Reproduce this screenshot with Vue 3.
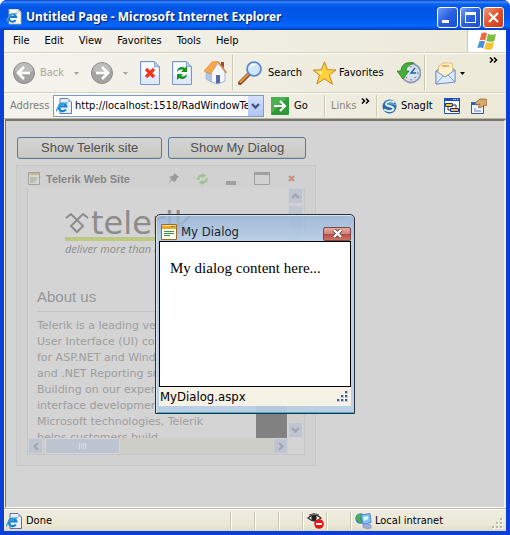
<script setup>
import { ref } from 'vue'

const menus = ['File', 'Edit', 'View', 'Favorites', 'Tools', 'Help']
const address = ref('http://localhost:1518/RadWindowTest/Default.aspx')
const gripDots = [[8, 0], [4, 4], [8, 4], [0, 8], [4, 8], [8, 8]]
</script>

<template>
  <div class="browser">
    <header class="titlebar">
      <svg class="ic16" viewBox="0 0 16 16">
        <path d="M3 0h9l3 3v12H3z" fill="#fbfaf0" stroke="#b9b49b" stroke-width=".8" />
        <path d="M12 0v3h3" fill="#d8d5c4" stroke="#b9b49b" stroke-width=".6" />
        <path d="M9.6 11.2A3.7 3.7 0 1 1 10.2 8H3.2" fill="none" stroke="#1c78c8" stroke-width="2" />
        <path d="M.8 12.5C.5 9 6 3.600 11.300 4.600" fill="none" stroke="#55a9dc" stroke-width="1.200" />
      </svg>
      <h1>Untitled Page - Microsoft Internet Explorer</h1>
      <div class="caption">
        <button aria-label="Minimize"><svg viewBox="0 0 19 19"><path d="M4 12h7v3H4z" fill="#fff" /></svg></button>
        <button aria-label="Maximize"><svg viewBox="0 0 19 19"><path d="M4 4h11v11H4zM5 7v7h9V7z" fill="#fff" fill-rule="evenodd" /></svg></button>
        <button class="close" aria-label="Close"><svg viewBox="0 0 19 19"><path d="M5 5l9 9M14 5l-9 9" stroke="#fff" stroke-width="2.200" /></svg></button>
      </div>
    </header>

    <div class="frame">
      <nav class="menubar">
        <button v-for="m in menus" :key="m">{{ m }}</button>
        <div class="throbber">
          <svg width="20" height="19" viewBox="0 0 20 19">
            <path d="M4.500 1.500C7-.2 8.500.4 10 1.300L8.300 8.500C6.500 7.400 5 7.400 2.600 8.500z" fill="#ee6a3a" />
            <path d="M11 1.800c2.500 1.300 5 1.200 8 .2l-1.700 7c-3 1.200-5.500 1-8 0z" fill="#7dbb42" />
            <path d="M2.300 9.500c2.300-1 3.900-1 5.700 0l-1.800 6.800c-1.900-1-3.700-1-5.900 0z" fill="#4b8fdc" />
            <path d="M9 10c2.500 1.200 5 1.200 8 0l-1.800 7c-3 1.200-5.500 1-8 0z" fill="#f6c433" />
          </svg>
        </div>
      </nav>

      <div class="toolbar">
        <button class="tb back" disabled>
          <svg width="22" height="22" viewBox="0 0 22 22">
            <circle cx="11" cy="11" r="10.500" fill="#a3a3a1" stroke="#8c8c8a" />
            <path d="M2 9a9 8 0 0 1 18 0c-5 3-13 3-18 0z" fill="#bcbcba" />
            <path d="M17 11H6M11 5l-6 6 6 6" fill="none" stroke="#fff" stroke-width="2.600" />
          </svg>
          <span>Back</span>
          <svg class="drop" width="5" height="3" viewBox="0 0 5 3"><path d="M0 0h5L2.500 3z" fill="#a5a395" /></svg>
        </button>
        <button class="tb fwd" disabled aria-label="Forward">
          <svg width="22" height="22" viewBox="0 0 22 22">
            <circle cx="11" cy="11" r="10.500" fill="#a3a3a1" stroke="#8c8c8a" />
            <path d="M2 9a9 8 0 0 1 18 0c-5 3-13 3-18 0z" fill="#bcbcba" />
            <path d="M5 11h11M11 5l6 6-6 6" fill="none" stroke="#fff" stroke-width="2.600" />
          </svg>
          <svg class="drop" width="5" height="3" viewBox="0 0 5 3"><path d="M0 0h5L2.500 3z" fill="#a5a395" /></svg>
        </button>
        <button class="tb sq" aria-label="Stop">
          <svg width="20" height="24" viewBox="0 0 20 24">
            <path d="M.5.500h14l5 5v18H.5z" fill="#dfe9fb" stroke="#7b95c4" />
            <path d="M2 2h12v5h4v8c-6-3-10 1-16-1z" fill="#f8fbff" />
            <path d="M14.500.500v5h5z" fill="#b9cdf0" stroke="#7b95c4" stroke-width=".7" />
            <path d="M6 8l8 8M14 8l-8 8" stroke="#f0361a" stroke-width="3.200" />
          </svg>
        </button>
        <button class="tb sq" aria-label="Refresh">
          <svg width="20" height="24" viewBox="0 0 20 24">
            <path d="M.5.500h14l5 5v18H.5z" fill="#dfe9fb" stroke="#7b95c4" />
            <path d="M2 2h12v5h4v8c-6-3-10 1-16-1z" fill="#f8fbff" />
            <path d="M14.500.500v5h5z" fill="#b9cdf0" stroke="#7b95c4" stroke-width=".7" />
            <path d="M5 11c0-5 5-6 8-4l2-2v6H9l2-2C9 8 7 8.500 5 11zM15 13c0 5-5 6-8 4l-2 2v-6h6l-2 2c2 1 4 .5 6-2z" fill="#12951c" />
          </svg>
        </button>
        <button class="tb home" aria-label="Home">
          <svg width="23" height="24" viewBox="0 0 23 24">
            <path d="M7 11l8-9 6 9v9l-7 3-7-2z" fill="#f4f7fe" stroke="#8fa2cc" stroke-width=".8" />
            <path d="M2 11l5 2v8l-5-3z" fill="#b4c6ea" stroke="#8fa2cc" stroke-width=".6" />
            <path d="M12 14h4v8l-4 .8z" fill="#5a6aa8" />
            <path d="M0 10L8 1l6-1-7 13z" fill="#f9a94c" stroke="#d8812f" stroke-width=".6" />
            <path d="M14 .8L22.500 12" stroke="#d98a4d" stroke-width="1.700" />
            <path d="M17 1h3v6l-3-3z" fill="#a04a35" />
          </svg>
        </button>
        <i class="sep"></i>
        <button class="tb search">
          <svg width="25" height="24" viewBox="0 0 25 24">
            <path d="M10.500 13.500L2 22" stroke="#8b4b22" stroke-width="4" stroke-linecap="round" />
            <path d="M10.500 13L2.500 21" stroke="#e79a4b" stroke-width="2" stroke-linecap="round" />
            <circle cx="16" cy="8" r="7" fill="#cfe6fb" stroke="#5b87cf" stroke-width="1.700" />
            <path d="M11 8a5 5 0 0 1 8-4c-4 0-6 2-8 4z" fill="#fff" />
          </svg>
          <span>Search</span>
        </button>
        <button class="tb fav">
          <svg width="25" height="24" viewBox="0 0 25 24">
            <path d="M12.500.8l2.800 8 8.700.2-6.700 5.200 3.200 9-8.200-5.400-7.500 5.200 2.700-8.800L1 9.200l8.400-.4z" fill="#ffd23c" stroke="#c8871d" stroke-linejoin="round" />
            <path d="M12 4l-1.500 6-5.500.5 4.500 3.300z" fill="#fff3a8" />
          </svg>
          <span>Favorites</span>
        </button>
        <button class="tb hist" aria-label="History">
          <svg width="24" height="22" viewBox="0 0 24 22">
            <circle cx="14" cy="11" r="9.500" fill="#d8e9fa" stroke="#8d9cae" stroke-width="1.800" />
            <circle cx="14" cy="11" r="7" fill="#cfe6fb" stroke="#b4c9df" stroke-width=".7" />
            <path d="M14 4v1.500M14 17v1.500M20 11h1.500M18.500 16l-1-1M9 16l1-1" stroke="#d86449" stroke-width="1.300" />
            <path d="M18 6l-4 5h5" fill="none" stroke="#315b94" stroke-width="1.400" />
            <path d="M17 1C9-1 4 3 4 9H0l6 8 6-8H9c0-3 2-6 8-8z" fill="#45ad38" stroke="#277f24" stroke-width=".8" />
          </svg>
        </button>
        <i class="sep"></i>
        <button class="tb mail" aria-label="Mail">
          <svg width="21" height="23" viewBox="0 0 21 23">
            <path d="M1 9l9-8 10 7v12L1 22z" fill="#a5bce9" stroke="#7690cc" stroke-width=".9" />
            <path d="M4 4l4-3h9l1 9-8 5-7-4z" fill="#fff0cc" stroke="#e2b26c" stroke-width=".8" />
            <path d="M1 9l9 6 10-7v12L1 22z" fill="#dcecff" stroke="#7690cc" stroke-width=".9" />
            <path d="M1 22l7-8M20 20l-7-7" stroke="#7690cc" stroke-width=".9" />
            <path d="M7 4h7" stroke="#efb064" stroke-width="2" />
          </svg>
          <svg class="drop" width="5" height="3" viewBox="0 0 5 3"><path d="M0 0h5L2.500 3z" fill="#000" /></svg>
        </button>
        <button class="more" aria-label="More toolbar buttons">
          <svg width="9" height="6" viewBox="0 0 9 6"><path d="M1 .500L3.500 3 1 5.500M5 .500L7.500 3 5 5.500" fill="none" stroke="#000" stroke-width="1.500" /></svg>
        </button>
      </div>

      <div class="addressbar">
        <label for="addr">Address</label>
        <div class="combo">
          <svg class="ic16" viewBox="0 0 16 16">
            <path d="M4 .500h8l3.500 3.500v11.500H4z" fill="#e9f0fc" stroke="#5f7cbb" />
            <path d="M12 .500v3.500h3.500z" fill="#9db6e4" />
            <path d="M9.800 11.500A3.800 3.800 0 1 1 10.300 8.300H3.200" fill="none" stroke="#1586cf" stroke-width="2.200" />
            <path d="M.8 13.500C0 9.500 6 4 11.500 5" fill="none" stroke="#3fa0de" stroke-width="1.300" />
          </svg>
          <input id="addr" v-model="address" type="text" />
          <button aria-label="Show address list">
            <svg width="9" height="7" viewBox="0 0 9 7"><path d="M1 1l3.500 3.500L8 1" fill="none" stroke="#3f5686" stroke-width="2.400" /></svg>
          </button>
        </div>
        <button class="go">
          <svg width="18" height="18" viewBox="0 0 18 18">
            <rect width="18" height="18" rx="1" fill="#2f9a3a" />
            <path d="M0 17V1q0-1 1-1h16z" fill="#4bb052" />
            <path d="M3 9h10M9 4l5 5-5 5" fill="none" stroke="#fff" stroke-width="2.200" />
          </svg>
          <span>Go</span>
        </button>
        <i class="sep"></i>
        <span class="links">Links</span>
        <button class="morelinks" aria-label="More links">
          <svg width="9" height="6" viewBox="0 0 9 6"><path d="M1 .500L3.500 3 1 5.500M5 .500L7.500 3 5 5.500" fill="none" stroke="#000" stroke-width="1.500" /></svg>
        </button>
        <i class="sep"></i>
        <button class="snag">
          <svg width="15" height="15" viewBox="0 0 15 15">
            <circle cx="7.500" cy="7.500" r="7" fill="#2c6ea8" />
            <path d="M12.500 3.500C9 1.500 4 2.500 4 5c0 3 7.500 1.500 7.500 4.500C11.500 12.500 6 13 2 10.500" fill="none" stroke="#e4f3ff" stroke-width="1.900" />
            <path d="M14 6C11 4 8 5 6 5" fill="none" stroke="#7fc1ec" />
          </svg>
          <span>SnagIt</span>
        </button>
        <button class="tool" aria-label="Window capture">
          <svg width="16" height="16" viewBox="0 0 16 16">
            <path d="M.5.500h15v15H.5z" fill="#fff" stroke="#1c50b8" />
            <path d="M0 0h16v3H0z" fill="#1c50b8" />
            <path d="M9 1.500h1M11 1.500h1M13 1.500h1" stroke="#fff" />
            <path d="M1.500 5.500h7v3h-7zM6.500 10.500h8v3h-8z" fill="#ffc61a" stroke="#1a2e90" />
            <path d="M9 7h3v3M4 9v3h2" fill="none" stroke="#333" />
          </svg>
        </button>
        <button class="tool" aria-label="Edit page">
          <svg width="16" height="16" viewBox="0 0 16 16">
            <path d="M.5 4.500h12v11H.5z" fill="#eef4ff" stroke="#315a92" />
            <path d="M0 4h7v3H0z" fill="#2b68b8" />
            <path d="M3 13h7M3 11h2" stroke="#6b8abf" />
            <path d="M5 4l4-3h5l2 1v5l-4 1-3 2-2-1 2-3-4 1-1-1z" fill="#dba96c" stroke="#7d5128" stroke-width=".7" />
          </svg>
        </button>
      </div>

      <main class="page">
        <div class="actions">
          <button class="site-btn">Show Telerik site</button>
          <button>Show My Dialog</button>
        </div>

        <section class="radwin">
          <div class="radbar">
            <svg class="radicon" width="12" height="13" viewBox="0 0 12 13">
              <path d="M.5.500h11v12H.5z" fill="#d6d6d1" stroke="#a2a29c" />
              <path d="M1 1h10v2H1z" fill="#ccb795" />
              <path d="M2 6h7M2 8h7M2 10h5" stroke="#94aa90" />
            </svg>
            <h2>Telerik Web Site</h2>
            <div class="radtools">
              <button aria-label="Pin"><svg width="11" height="11" viewBox="0 0 11 11"><path d="M6 0l5 4-2 1-1 3-2 1-2-2-4 4 3-5-2-2 3-1 2-1z" fill="#9b9b9b" /></svg></button>
              <button aria-label="Reload"><svg width="11" height="12" viewBox="0 0 11 12"><path d="M1.500 7V5Q2 2.500 6 2.500M9.500 5v2Q9 9.500 5 9.500" fill="none" stroke="#9dc294" stroke-width="2.200" /><path d="M5 0l4 2.500L5 5.500zM6 6.500L2 9.500 6 12z" fill="#9dc294" /></svg></button>
              <button aria-label="Minimize window"><svg width="10" height="12" viewBox="0 0 10 12"><path d="M0 8h10v4H0z" fill="#a0a0a0" /></svg></button>
              <button aria-label="Maximize window"><svg width="16" height="13" viewBox="0 0 16 13"><path d="M.5.500h15v12H.5z" fill="none" stroke="#a0a0a0" /><path d="M0 0h16v3H0z" fill="#a0a0a0" /></svg></button>
              <button aria-label="Close window"><svg width="7" height="7" viewBox="0 0 7 7"><path d="M1 1l5 5M6 1L1 6" stroke="#ce9080" stroke-width="2.200" /></svg></button>
            </div>
          </div>
          <div class="radview">
            <article class="site">
              <div class="brand">
                <svg width="24" height="22" viewBox="0 0 24 22"><path d="M1 6l5-4 12 12-6 6-6-6L18 2l5 4" fill="none" stroke="#8c8c8c" stroke-width="2" /></svg>
                <span>telerik</span>
              </div>
              <p class="tagline">deliver more than expected</p>
              <h3>About us</h3>
              <p class="about">
                Telerik is a leading vendor<br />User Interface (UI) co<br />for ASP.NET and Windows<br />and .NET Reporting so<br />Building on our experience<br />interface development and<br />Microsoft technologies, Telerik<br />helps customers build
              </p>
              <div class="block"></div>
            </article>
            <div class="vscroll">
              <button aria-label="Scroll up"><svg width="9" height="6" viewBox="0 0 9 6"><path d="M1 5l3.500-3.500L8 5" fill="none" stroke="#a0a5b0" stroke-width="2.200" /></svg></button>
              <div class="vthumb"></div>
              <button aria-label="Scroll down"><svg width="9" height="6" viewBox="0 0 9 6"><path d="M1 1l3.500 3.500L8 1" fill="none" stroke="#a0a5b0" stroke-width="2.200" /></svg></button>
            </div>
            <div class="hscroll">
              <button aria-label="Scroll left"><svg width="6" height="9" viewBox="0 0 6 9"><path d="M5 1L1.500 4.500 5 8" fill="none" stroke="#a0a5b0" stroke-width="2.200" /></svg></button>
              <div class="hthumb"><i></i><i></i><i></i><i></i></div>
              <button aria-label="Scroll right"><svg width="6" height="9" viewBox="0 0 6 9"><path d="M1 1l3.500 3.500L1 8" fill="none" stroke="#a0a5b0" stroke-width="2.200" /></svg></button>
            </div>
          </div>
        </section>

        <div class="modal">
          <section class="dialog" role="dialog" aria-labelledby="dlgtitle">
            <div class="dlgbar">
              <svg width="16" height="16" viewBox="0 0 16 16">
                <path d="M.5.500h15v15H.5z" fill="#fffef3" stroke="#9a6b2a" />
                <path d="M1 1h14v4H1z" fill="#f0a62c" />
                <path d="M1 1h14v1H1z" fill="#ffdf7b" />
                <path d="M10 2.500h2M13 2.500h1" stroke="#3d8a38" />
                <path d="M3 7.500h10M3 9.500h10M3 11.500h6" stroke="#3f9146" />
              </svg>
              <h2 id="dlgtitle">My Dialog</h2>
              <button aria-label="Close dialog"><svg width="11" height="9" viewBox="0 0 11 9"><path d="M2 1l7 7M9 1L2 8" stroke="#6b4444" stroke-width="4" /><path d="M2 1l7 7M9 1L2 8" stroke="#fff" stroke-width="2.400" /></svg></button>
            </div>
            <div class="dlgbody">My dialog content here...</div>
            <div class="dlgstatus">
              <span>MyDialog.aspx</span>
              <svg width="11" height="11" viewBox="0 0 11 11">
                <g v-for="d in gripDots" :key="d.join()">
                  <rect :x="d[0]" :y="d[1]" width="3" height="3" fill="#b6cbe8" />
                  <rect :x="d[0]" :y="d[1]" width="2" height="2" fill="#3d5c94" />
                </g>
              </svg>
            </div>
          </section>
        </div>
      </main>

      <footer class="status">
        <div class="done">
          <svg class="ic16" viewBox="0 0 16 16">
            <path d="M4 .500h8l3.500 3.500v11.500H4z" fill="#e9f0fc" stroke="#5f6fa8" />
            <path d="M12 .500v3.500h3.500z" fill="#9db6e4" />
            <path d="M9.800 11.500A3.800 3.800 0 1 1 10.300 8.300H3.200" fill="none" stroke="#1586cf" stroke-width="2.200" />
            <path d="M.8 13.500C0 9.500 6 4 11.500 5" fill="none" stroke="#3fa0de" stroke-width="1.300" />
          </svg>
          <span>Done</span>
        </div>
        <div class="cell"></div>
        <div class="cell"></div>
        <div class="cell"></div>
        <div class="cell">
          <svg width="17" height="16" viewBox="0 0 17 16">
            <path d="M1 5q6-6 13 0-6 6-13 0z" fill="#fff" stroke="#333" stroke-width="1.200" />
            <circle cx="7" cy="5" r="2.700" fill="#222" />
            <path d="M2 2q5-3 10 0" fill="none" stroke="#555" />
            <circle cx="12" cy="11" r="4.800" fill="#ee1111" />
            <path d="M9 11h6" stroke="#fff" stroke-width="2" />
          </svg>
        </div>
        <div class="cell"></div>
        <div class="zone">
          <svg width="17" height="16" viewBox="0 0 17 16">
            <circle cx="5.500" cy="5.500" r="5.200" fill="#2f7fd4" />
            <path d="M2 2q3-2 5 0L5 6l2 3-3 1-3-4z" fill="#4cb33c" />
            <path d="M6 2l9-1.500 1 9-8 2z" fill="#7cc4f5" stroke="#5f7fc0" />
            <path d="M8 4l5-1 .5 3L9 8z" fill="#d9f3ff" />
            <path d="M8 12l4-1.500 4 1.500v3l-4 1-4-2z" fill="#9db0dc" stroke="#6d7fb4" stroke-width=".6" />
          </svg>
          <span>Local intranet</span>
        </div>
        <svg class="grip" width="12" height="12" viewBox="0 0 12 12">
          <g v-for="d in gripDots" :key="d.join()">
            <rect :x="d[0] + 1" :y="d[1] + 1" width="2" height="2" fill="#fff" />
            <rect :x="d[0]" :y="d[1]" width="2" height="2" fill="#b8b4a2" />
          </g>
        </svg>
      </footer>
    </div>
  </div>
</template>

<style>
body { margin: 0; background: #fff; }
</style>

<style scoped>
* { box-sizing: border-box; }
button {
  margin: 0; padding: 0; border: 0; background: none; font: inherit; color: inherit;
  display: flex; align-items: center; justify-content: center; flex: none;
}
svg { display: block; flex: none; }
h1, h2, h3, p { margin: 0; }
.ic16 { width: 16px; height: 16px; }
.browser {
  min-height: 100vh; display: flex; flex-direction: column; overflow: hidden;
  background: #0a3fd8; border-radius: 7px 7px 0 0;
  font: 11px/14px "DejaVu Sans Condensed", "DejaVu Sans", sans-serif; color: #000;
}
.titlebar {
  height: 30px; flex: none; display: flex; align-items: center; gap: 4px; padding: 4px 6px 0;
  background: linear-gradient(#0a3cc0 0, #3a8bff 2px, #0a62f0 4px, #0054e3 8px, #0058ea 18px, #0468fc 26px, #0350d8 28px, #003dc0 30px);
}
.titlebar h1 {
  flex: 1; font: bold 12px/18px "Noto Sans", sans-serif; color: #fff; white-space: nowrap;
  text-shadow: 1px 1px 1px #0a1c66;
}
.caption { display: flex; gap: 2px; }
.caption button {
  width: 21px; height: 21px; border: 1px solid #fff; border-radius: 3px;
  background: linear-gradient(135deg, #6f9cf5, #2860e0 50%, #1d4fd0);
}
.caption .close { background: linear-gradient(135deg, #f09a7c, #e2512a 50%, #c93d15); }
.caption svg { width: 19px; height: 19px; }

.frame {
  flex: 1; display: flex; flex-direction: column; margin: 0 4px 4px;
  background: linear-gradient(90deg, #f4f3ee, #ece9d8);
}
.menubar {
  display: flex; align-items: stretch; height: 23px; gap: 15px; padding-left: 9px; flex: none;
  border-bottom: 1px solid #d6d0b8;
}
.throbber {
  margin-left: auto; width: 39px; background: #fff; border-left: 1px solid #cfc9b4;
  display: flex; align-items: center; justify-content: center;
}
.toolbar {
  display: flex; align-items: center; height: 40px; flex: none; padding: 0 8px 0 9px;
  border-top: 1px solid #fff; border-bottom: 1px solid #d6d0b8;
}
.tb { justify-content: flex-start; gap: 5px; }
.tb:disabled { color: #aca899; }
.back { width: 78px; }
.back .drop { margin-left: 5px; }
.fwd { width: 49px; gap: 10px; }
.sq { width: 32px; }
.home { width: 28px; }
.search { width: 74px; margin-left: 4px; }
.fav { width: 84px; gap: 2px; }
.hist { width: 27px; margin-left: 1px; }
.mail { margin-left: 9px; gap: 4px; }
.sep { align-self: stretch; width: 2px; margin: 1px 0; border-left: 1px solid #cdc8b2; border-right: 1px solid #fff; flex: none; }
.more { margin-left: auto; align-self: flex-start; margin-top: 3px; }

.addressbar {
  display: flex; align-items: center; height: 26px; flex: none; padding-left: 6px;
  border-top: 1px solid #fff; border-bottom: 1px solid #b9b5a4;
}
.addressbar label { color: #7f7c73; width: 43px; }
.combo {
  flex: 1; max-width: 640px; min-width: 120px; height: 22px; display: flex; align-items: center;
  border: 1px solid #7f9db9; background: #fff; padding-left: 2px;
}
.combo input { flex: 1; min-width: 0; border: 0; padding: 0 0 0 3px; font: inherit; outline: 0; background: none; color: #000; }
.combo button { width: 15px; height: 20px; background: linear-gradient(#d4e0fd, #b0c5f5); }
.go { gap: 5px; margin-left: 7px; width: 53px; justify-content: flex-start; }
.links { color: #8a877c; width: 30px; margin-left: 5px; }
.morelinks { align-self: flex-start; margin: 4px 6px 0 0; }
.snag { gap: 4px; margin-left: 4px; width: 62px; justify-content: flex-start; }
.tool { width: 16px; margin-right: 11px; }
.tool:last-child { margin-right: 19px; }

.page {
  position: relative; flex: 1; margin-left: 1px; background: #d4d4d4; padding: 16px 10px 40px;
  border: 1px solid #77736a; border-top-width: 2px; border-right: 2px solid #f1efe2; border-bottom-color: #fff;
}
.actions { display: flex; gap: 6px; padding-left: 1px; }
.actions button {
  height: 22px; padding: 0 21px; border: 1px solid #5a7896; border-radius: 3px;
  background: linear-gradient(#d4d4d2, #c9c9c5); color: #505050;
  font: 13px/20px "Liberation Sans", sans-serif; box-shadow: inset 0 -1px #bfbfb8;
}
.actions .site-btn { padding: 0 23px; }
.radwin { width: 300px; margin-top: 6px; border: 1px solid #c8c8c8; padding: 0 10px 10px; background: #d1d1d1; }
.radbar { display: flex; align-items: center; height: 22px; padding: 3px 10px 0 1px; }
.radbar h2 { margin-left: 6px; font: bold 11px/14px "Liberation Sans", sans-serif; color: #868686; }
.radtools { display: flex; align-items: center; gap: 18px; margin-left: auto; }
.radview {
  display: grid; grid-template-columns: 1fr 16px; grid-template-rows: 250px 16px;
  border: 1px solid #c6c6c4; border-top: 0; background: #d4d4d4;
}
.site { position: relative; overflow: hidden; padding: 21px 0 0 9px; }
.brand { display: flex; align-items: center; gap: 2px; height: 28px; margin-left: 28px; white-space: nowrap; }
.brand span { font: 32px/28px "DejaVu Sans", sans-serif; color: #8c8c8c; }
.tagline {
  margin-left: 28px; width: 112px; border-top: 4px solid #bdc980; white-space: nowrap;
  font: italic 11px/16px "Open Sans", sans-serif; color: #8c8c8c;
}
.site h3 {
  margin-top: 30px; padding-bottom: 4px; border-bottom: 1px solid #c4c4c4;
  font: 15px/20px "Liberation Sans", sans-serif; color: #969696;
}
.about { margin-top: 6px; font: 11px/16px "DejaVu Sans", sans-serif; color: #9e9e9e; white-space: nowrap; }
.block { position: absolute; right: 1px; bottom: 0; width: 31px; height: 50px; background: #828282; }
.vscroll { display: flex; flex-direction: column; background: #cfcfcc; }
.vscroll button, .hscroll button { width: 15px; height: 16px; background: #bfc4d1; border: 1px solid #ced1d8; border-radius: 2px; }
.vthumb { height: 110px; margin: 1px 0 auto; width: 15px; background: #c1c6d2; border: 1px solid #ced1d8; border-radius: 2px; }
.hscroll { grid-column: 1; display: flex; background: #cecec9; }
.hthumb {
  width: 75px; margin: 0 auto 0 2px; background: #bfc4d1; border: 1px solid #d2d5dc; border-radius: 2px;
  display: flex; gap: 1px; align-items: center; justify-content: center;
}
.hthumb i { width: 1px; height: 6px; background: #d6dae2; }

.modal { position: absolute; inset: 0; display: grid; place-items: center; }
.dialog {
  width: 200px; height: 200px; display: flex; flex-direction: column; padding: 0 3px 7px;
  border: 1px solid #2b2f36; border-radius: 5px 5px 0 0;
  background: linear-gradient(rgba(150, 180, 216, .8), rgba(184, 207, 232, .88) 26px, rgba(184, 207, 232, .9));
  box-shadow: inset 0 1px #dbe6f2, inset 1px 0 #d5e2f0, inset 0 -1px #38b6d8;
}
.dlgbar { display: flex; align-items: center; height: 26px; flex: none; padding: 7px 0 0 2px; gap: 4px; }
.dlgbar h2 { flex: 1; font: 13px/18px "DejaVu Sans Condensed", "DejaVu Sans", sans-serif; color: #1c2530; }
.dlgbar button {
  width: 28px; height: 14px; margin-top: 4px; border: 1px solid #7e4848; border-radius: 2px;
  background: linear-gradient(#e3aaa2, #d08379 48%, #b74a40 52%, #cc7266);
}
.dlgbody { flex: 1; border: 1px solid #000; background: #fff; padding: 16px 10px; font: 15px/20px "Liberation Serif", serif; }
.dlgstatus {
  display: flex; align-items: center; justify-content: space-between; height: 19px; flex: none;
  padding: 0 3px 0 1px; background: #f6f2e6; font: 13px/18px "DejaVu Sans Condensed", "DejaVu Sans", sans-serif;
}

.status {
  display: flex; align-items: center; height: 23px; flex: none; padding: 2px 2px 0;
  border-top: 1px solid #b9b5a4; box-shadow: inset 0 1px #fff;
  background: linear-gradient(#eeecdf, #ece9d8 70%, #dedac4);
}
.done { flex: 1; display: flex; align-items: center; gap: 4px; }
.cell, .zone { height: 18px; border-left: 1px solid #c9c5b2; box-shadow: inset 1px 0 #fff; display: flex; align-items: center; }
.cell { width: 24px; padding-left: 4px; }
.zone { width: 142px; padding-left: 4px; gap: 3px; }
.grip { align-self: flex-end; margin-bottom: 1px; }
</style>
